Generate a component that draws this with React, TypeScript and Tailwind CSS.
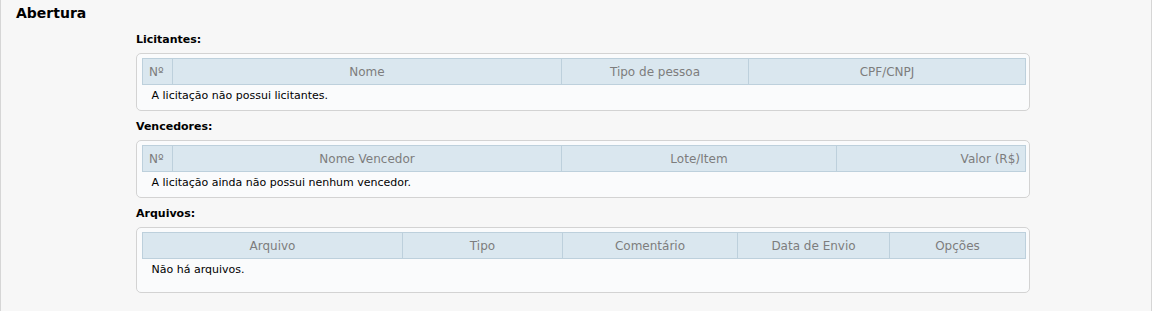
import React from 'react';

type Col = { label: string; width: number; align?: 'left' | 'center' | 'right' };

type Section = {
  title: string;
  cols: Col[];
  empty: string;
  tall?: boolean;
};

const sections: Section[] = [
  {
    title: 'Licitantes:',
    cols: [
      { label: 'Nº', width: 30, align: 'left' },
      { label: 'Nome', width: 389 },
      { label: 'Tipo de pessoa', width: 187 },
      { label: 'CPF/CNPJ', width: 277 },
    ],
    empty: 'A licitação não possui licitantes.',
  },
  {
    title: 'Vencedores:',
    cols: [
      { label: 'Nº', width: 30, align: 'left' },
      { label: 'Nome Vencedor', width: 389 },
      { label: 'Lote/Item', width: 275 },
      { label: 'Valor (R$)', width: 189, align: 'right' },
    ],
    empty: 'A licitação ainda não possui nenhum vencedor.',
  },
  {
    title: 'Arquivos:',
    cols: [
      { label: 'Arquivo', width: 260 },
      { label: 'Tipo', width: 160 },
      { label: 'Comentário', width: 175 },
      { label: 'Data de Envio', width: 152 },
      { label: 'Opções', width: 136 },
    ],
    empty: 'Não há arquivos.',
    tall: true,
  },
];

function alignClass(a?: Col['align']) {
  if (a === 'left') return 'text-left pl-[6px]';
  if (a === 'right') return 'text-right pr-[5px]';
  return 'text-center';
}

function DataBox({ section }: { section: Section }) {
  return (
    <div>
      <h3 className="text-[11px] font-bold leading-[14px] text-black mb-[6px]">{section.title}</h3>
      <div
        className={
          'border border-[#d3d3d3] rounded-[5px] bg-[#fafbfc] px-[5px] pt-[4px] ' +
          (section.tall ? 'pb-[12px]' : 'pb-[4px]')
        }
      >
        <table className="w-full table-fixed border-collapse">
          <colgroup>
            {section.cols.map((c) => (
              <col key={c.label} style={{ width: c.width }} />
            ))}
          </colgroup>
          <thead>
            <tr className="bg-[#dae7ef]">
              {section.cols.map((c) => (
                <th
                  key={c.label}
                  className={
                    'h-[26px] border border-[#bdd0dc] text-[12px] font-normal text-[#7d7d7d] ' +
                    alignClass(c.align)
                  }
                >
                  {c.label}
                </th>
              ))}
            </tr>
          </thead>
          <tbody>
            <tr>
              <td colSpan={section.cols.length} className="h-[21px] pl-[9px] text-[11px] text-black leading-[21px]">
                {section.empty}
              </td>
            </tr>
          </tbody>
        </table>
      </div>
    </div>
  );
}

export default function App() {
  return (
    <div
      className="min-h-[311px] w-[1152px] bg-[#f7f7f7] border-l border-r border-[#d6d6d6]"
      style={{ fontFamily: 'Verdana, "DejaVu Sans", sans-serif' }}
    >
      <h2 className="pl-[15px] pt-[4px] text-[14px] font-bold leading-[18px] text-black">Abertura</h2>
      <div className="ml-[135px] w-[894px] mt-[11px] flex flex-col gap-[9px]">
        {sections.map((s) => (
          <DataBox key={s.title} section={s} />
        ))}
      </div>
    </div>
  );
}
